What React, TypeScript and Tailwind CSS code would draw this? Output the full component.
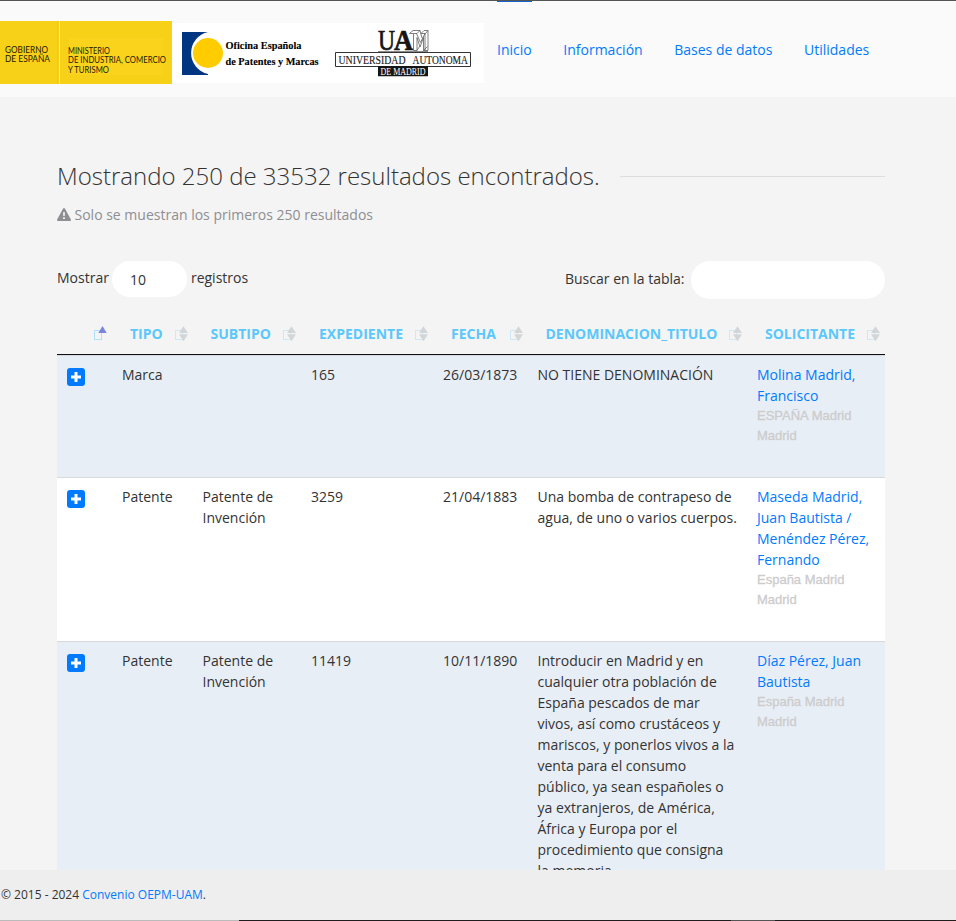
import React from "react";

type Row = {
  tipo: string;
  subtipo: string;
  expediente: string;
  fecha: string;
  titulo: string;
  solicitante: string;
  lugar: string;
  tone: string;
};

const rows: Row[] = [
  { tipo: "Marca", subtipo: "", expediente: "165", fecha: "26/03/1873", titulo: "NO TIENE DENOMINACIÓN", solicitante: "Molina Madrid, Francisco", lugar: "ESPAÑA Madrid Madrid", tone: "h-[122px] bg-[#e8eef6]" },
  { tipo: "Patente", subtipo: "Patente de Invención", expediente: "3259", fecha: "21/04/1883", titulo: "Una bomba de contrapeso de agua, de uno o varios cuerpos.", solicitante: "Maseda Madrid, Juan Bautista / Menéndez Pérez, Fernando", lugar: "España Madrid Madrid", tone: "h-[164px] bg-white" },
  { tipo: "Patente", subtipo: "Patente de Invención", expediente: "11419", fecha: "10/11/1890", titulo: "Introducir en Madrid y en cualquier otra población de España pescados de mar vivos, así como crustáceos y mariscos, y ponerlos vivos a la venta para el consumo público, ya sean españoles o ya extranjeros, de América, África y Europa por el procedimiento que consigna la memoria.", solicitante: "Díaz Pérez, Juan Bautista", lugar: "España Madrid Madrid", tone: "h-[256px] bg-[#e8eef6]" },
];

const columns = "grid grid-cols-[55px_80.5px_108.5px_132px_94.5px_219.5px_138px]";
const headers = ["", "TIPO", "SUBTIPO", "EXPEDIENTE", "FECHA", "DENOMINACION_TITULO", "SOLICITANTE"];

function SortIcon({ active }: { active: boolean }) {
  return (
    <svg width="14" height="16" viewBox="0 0 14 16" className="mr-1 shrink-0">
      <path d="M.5 4.500h7v9h-7z" fill="none" stroke="#5bc8fb" strokeOpacity={active ? 0.45 : 0.25} />
      {active ? (
        <path d="M4.300 7 8.500 0l4.200 7z" fill="#7b83dc" />
      ) : (
        <path d="M4 7 8.500 .2 13 7zM4 8.200h9L8.500 15.200z" fill="#d0d2d4" fillOpacity=".9" />
      )}
    </svg>
  );
}

function MinistryLogo() {
  return (
    <svg width="172" height="63" viewBox="0 0 172 63" className="shrink-0" fontFamily="Lato, sans-serif" fontSize="8.500" fill="#1d1800">
      <path d="M0 0h172v63H0z" fill="#f7d117" />
      <path d="M69 17h94v37H69z" fill="#fad31c" />
      <path d="M57.500 0v63" stroke="#efc91b" />
      <path d="M59.500 0v63" stroke="#ffec70" />
      <text x="5" y="32" textLength="43" lengthAdjust="spacingAndGlyphs">GOBIERNO</text>
      <text x="5" y="41" textLength="45" lengthAdjust="spacingAndGlyphs">DE ESPAÑA</text>
      <text x="68" y="33" textLength="42" lengthAdjust="spacingAndGlyphs">MINISTERIO</text>
      <text x="68" y="42" textLength="98" lengthAdjust="spacingAndGlyphs">DE INDUSTRIA, COMERCIO</text>
      <text x="68" y="52" textLength="41" lengthAdjust="spacingAndGlyphs">Y TURISMO</text>
    </svg>
  );
}

function PartnerLogos() {
  return (
    <svg width="312" height="60" viewBox="172 23 312 60" className="mt-0.5 shrink-0" fontFamily="Liberation Serif, serif">
      <path d="M172 23h312v60H172z" fill="#fff" />
      <path d="M182 32h26a21.500 21.500 0 0 0 0 42v1h-26z" fill="#003580" />
      <circle cx="208" cy="53" r="15" fill="#fc0" />
      <g fontWeight="bold" fontSize="10.500" fill="#000" stroke="#000" strokeWidth=".1">
        <text x="225.500" y="48.500" textLength="76" lengthAdjust="spacingAndGlyphs">Oficina Española</text>
        <text x="225.500" y="64.500" textLength="93" lengthAdjust="spacingAndGlyphs">de Patentes y Marcas</text>
      </g>
      <g fill="#151515">
        <text x="378" y="50.300" fontSize="29" textLength="17" lengthAdjust="spacingAndGlyphs" stroke="#151515" strokeWidth=".7">U</text>
        <text x="394" y="50.300" fontSize="29" fontWeight="bold" textLength="19" lengthAdjust="spacingAndGlyphs" stroke="#151515" strokeWidth=".7">A</text>
        <path d="M378 51.500h50v1.300h-50z" />
        <path d="M335.500 52.500h135v14h-135z" fill="none" stroke="#333" />
        <g stroke="#222" strokeWidth=".15">
          <text x="338.500" y="64.300" fontSize="13.500" textLength="67" lengthAdjust="spacingAndGlyphs">UNIVERSIDAD</text>
          <text x="412.500" y="64.300" fontSize="13.500" textLength="55.500" lengthAdjust="spacingAndGlyphs">AUTONOMA</text>
        </g>
        <path d="M378 66h50v10.300h-50z" />
        <text x="380.500" y="75" fontSize="11" fill="#fff" textLength="45" lengthAdjust="spacingAndGlyphs">DE MADRID</text>
      </g>
      <path d="M409.500 33.500l3.500-3h7l-3 3zM421 33.500l3-3h4l-2.500 3zM413.500 34v16.500h3.500V37.500L420 47l3.500-9.500v13h4.500v-20M416.500 33.500l4 9 4.500-9v17M420 30.500l2 7.500M417 50.500l2.500-4M423.500 50.500l4-4" fill="none" stroke="#555" strokeWidth=".75" />
    </svg>
  );
}

export default function App() {
  return (
    <div className="flex h-[921px] w-[956px] flex-col overflow-hidden bg-[#f4f4f4] font-['Open_Sans',sans-serif] text-sm leading-[21px] text-[#333]">
      <header className="h-[97px] shrink-0 border-t border-[#555] bg-[#fafafa]">
        <div className="flex">
          <div className="flex pt-5">
            <MinistryLogo />
            <PartnerLogos />
          </div>
          <nav className="ml-[13px] flex gap-[31.6px] text-[#007bff]">
            <a className="border-t border-[#1265cc] pt-[37px]">Inicio</a>
            <a className="pt-[38px]">Información</a>
            <a className="pt-[38px]">Bases de datos</a>
            <a className="pt-[38px]">Utilidades</a>
          </nav>
        </div>
      </header>

      <main className="min-h-0 flex-1 overflow-hidden pr-[71px] pl-[57px]">
        <div className="flex items-center pt-[61px]">
          <h1 className="text-2xl leading-9 font-light whitespace-nowrap">Mostrando 250 de 33532 resultados encontrados.</h1>
          <div className="ml-5 h-px flex-1 bg-[#ddd]" />
        </div>
        <p className="mt-[10px] flex items-center text-[#8e8e93]">
          <svg width="14" height="13" viewBox="0 0 14 13" className="mr-[3.5px]" fill="#8e8e93">
            <path fillRule="evenodd" d="M6.100.5q.9-1 1.800 0l6 11q.4 1.300-1 1.500H1.100q-1.400-.2-1-1.500zM6 4.300l.3 3.700h1.400L8 4.300zm.1 4.900v1.700h1.800V9.200z" />
          </svg>
          Solo se muestran los primeros 250 resultados
        </p>
        <div className="mt-[36px] flex h-[38px] justify-between">
          <div className="flex">
            <span className="pt-[6px]">Mostrar</span>
            <div className="mr-1 ml-[3px] h-9 w-[75px] rounded-full bg-white pt-[8px] pl-[18px]">10</div>
            <span className="pt-[6px]">registros</span>
          </div>
          <label className="flex">
            <span className="pt-[7px]">Buscar en la tabla:</span>
            <input className="ml-[6.5px] h-[38px] w-[194px] rounded-[19px] bg-white px-4 outline-none" />
          </label>
        </div>

        <div className={columns + " mt-[14px] h-[42px] border-b border-[#111] font-bold text-[#5bc8fb]"}>
          {headers.map((title, i) => (
            <div key={i} className="flex items-center justify-between pl-[18px]">
              <span>{title}</span>
              <SortIcon active={i === 0} />
            </div>
          ))}
        </div>
        {rows.map((row) => (
          <div key={row.expediente} className={columns + " border-t border-[#d6dade] pt-2 " + row.tone}>
            <div className="pt-1 pl-[10px]">
              <svg width="18" height="18" viewBox="0 0 18 18">
                <rect width="18" height="18" rx="3" fill="#007bff" />
                <path d="M9 4v10M4 9h10" stroke="#fff" strokeWidth="3" />
              </svg>
            </div>
            <div className="px-[10px]">{row.tipo}</div>
            <div className="px-[10px]">{row.subtipo}</div>
            <div className="px-[10px]">{row.expediente}</div>
            <div className="px-[10px]">{row.fecha}</div>
            <div className="px-[10px]">{row.titulo}</div>
            <div className="px-[10px]">
              <a className="block text-[#007bff]">{row.solicitante}</a>
              <p className="font-['Liberation_Sans',sans-serif] text-[13px] leading-5 text-[#ccc] [-webkit-text-stroke:0.3px_#ccc]">{row.lugar}</p>
            </div>
          </div>
        ))}
      </main>

      <footer className="h-[50px] shrink-0 bg-[#eee] pt-4 pl-px text-xs">
        <p className="leading-[18px]">
          © 2015 - 2024 <a className="text-[#007bff]">Convenio OEPM-UAM</a>.
        </p>
      </footer>
      <div className="flex h-px shrink-0 bg-[#201d1c]">
        <div className="w-[239px] bg-[#bbb]" />
        <div className="ml-[492px] w-[44px] bg-[#555]" />
      </div>
    </div>
  );
}
